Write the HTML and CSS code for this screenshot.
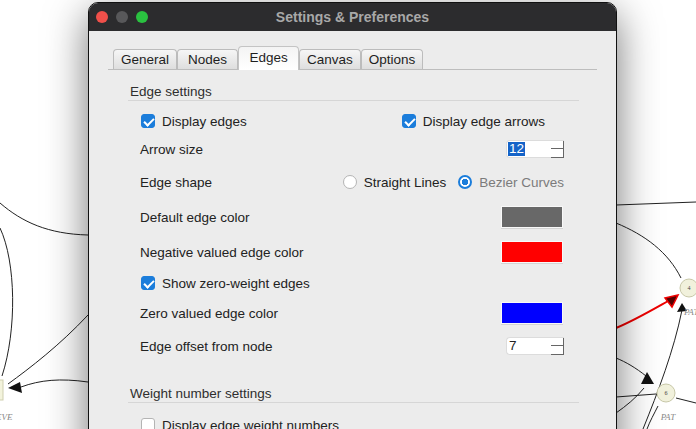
FILE: index.html
```html
<!DOCTYPE html>
<html lang="en">
<head>
    <meta charset="UTF-8">
    <title>Settings &amp; Preferences</title>
    <link rel="stylesheet" href="styles.css">
</head>
<body>
    <!-- graph canvas behind the dialog -->
    <svg class="graph" width="696" height="429" viewBox="0 0 696 429">
        <g fill="none" stroke="#222" stroke-width="1">
            <path d="M0 203 C22 222 48 234 88 235"/>
            <path d="M0 228 C16 262 17 330 2 376"/>
            <path d="M88 315 C60 345 30 368 8 384"/>
            <path d="M88 382 C60 378 40 380 21 387"/>
            <path d="M616 205 L696 202"/>
            <path d="M616 223 C645 235 668 252 681 278"/>
            <path d="M616 358 C626 362 636 368 646 376"/>
            <path d="M616 397 L656 394"/>
            <path d="M616 413 C626 406 636 398 644 388"/>
            <path d="M643 429 C658 392 674 350 682 310"/>
            <path d="M676 398 L696 403"/>
            <path d="M658 406 C654 414 650 421 647 429"/>
        </g>
        <path d="M616 328 C635 320 652 310 668 301" fill="none" stroke="#e00" stroke-width="2"/>
        <polygon points="678,295 665,298 672,307" fill="#500" stroke="#e00" stroke-width="1.5"/>
        <polygon points="8,388 20,382 22,393" fill="#111"/>
        <polygon points="682,303 677,312 687,311" fill="#111"/>
        <polygon points="647,372 641,384 654,384" fill="#111"/>
        <rect x="-14" y="380" width="17" height="20" fill="#f3f3dc" stroke="#cfcfb0"/>
        <circle cx="689" cy="288" r="9" fill="#f1f1dc" stroke="#c8c8a8"/>
        <circle cx="666" cy="393" r="9" fill="#f1f1dc" stroke="#c8c8a8"/>
        <g class="node-num">
            <text x="689" y="290" text-anchor="middle">4</text>
            <text x="666" y="395" text-anchor="middle">6</text>
        </g>
        <g class="node-label">
            <text x="684" y="315">PAT</text>
            <text x="668" y="420" text-anchor="middle">PAT</text>
            <text x="-4" y="420">EVE</text>
        </g>
    </svg>

    <div class="window">
        <div class="titlebar">
            <div class="lights">
                <span class="light red"></span>
                <span class="light grey"></span>
                <span class="light green"></span>
            </div>
            <div class="title">Settings &amp; Preferences</div>
            <div></div>
        </div>

        <div class="content">
            <div class="tabs">
                <div class="tab">General</div>
                <div class="tab">Nodes</div>
                <div class="tab active">Edges</div>
                <div class="tab">Canvas</div>
                <div class="tab">Options</div>
            </div>

            <div class="pane">
                <div class="group-title">Edge settings</div>
                <div class="rows">
                    <div class="row">
                        <label class="check"><span class="box on"></span>Display edges</label>
                        <label class="check arrows"><span class="box on"></span>Display edge arrows</label>
                    </div>
                    <div class="row">
                        <span>Arrow size</span>
                        <div class="spinner"><span class="value selected">12</span><span class="stepper"></span></div>
                    </div>
                    <div class="row gap-m">
                        <span>Edge shape</span>
                        <div class="radios">
                            <label class="radio"><span class="dot"></span>Straight Lines</label>
                            <label class="radio dim"><span class="dot on"></span>Bezier Curves</label>
                        </div>
                    </div>
                    <div class="row gap-l">
                        <span>Default edge color</span>
                        <span class="swatch grey"></span>
                    </div>
                    <div class="row gap-l">
                        <span>Negative valued edge color</span>
                        <span class="swatch red"></span>
                    </div>
                    <div class="row gap-s">
                        <label class="check"><span class="box on"></span>Show zero-weight edges</label>
                    </div>
                    <div class="row gap-xs">
                        <span>Zero valued edge color</span>
                        <span class="swatch blue"></span>
                    </div>
                    <div class="row gap-m">
                        <span>Edge offset from node</span>
                        <div class="spinner"><span class="value">7</span><span class="stepper"></span></div>
                    </div>
                </div>

                <div class="group-title second">Weight number settings</div>
                <div class="rows">
                    <div class="row gap-xs">
                        <label class="check"><span class="box"></span>Display edge weight numbers</label>
                    </div>
                </div>
            </div>
        </div>
    </div>
</body>
</html>
```

FILE: styles.css
```css
* {
    margin: 0;
    padding: 0;
    box-sizing: border-box;
}

body {
    width: 696px;
    height: 429px;
    overflow: hidden;
    position: relative;
    background: #fff;
    font-family: 'Liberation Sans', Arial, sans-serif;
    font-size: 13.5px;
    color: #222;
}

.graph {
    position: absolute;
    left: 0;
    top: 0;
}

.node-num text {
    font-family: 'Liberation Serif', serif;
    font-size: 6px;
    fill: #444;
}

.node-label text {
    font-family: 'Liberation Serif', serif;
    font-style: italic;
    font-size: 9px;
    fill: #888;
}

/* dialog window */
.window {
    position: absolute;
    left: 88px;
    top: 2px;
    width: 529px;
    height: 460px;
    border: 1px solid #111;
    border-radius: 10px 10px 0 0;
    background: #ececec;
    box-shadow: 0 12px 42px rgba(0,0,0,0.55);
    overflow: hidden;
}

.titlebar {
    height: 28px;
    background: #2c2c2e;
    display: grid;
    grid-template-columns: 1fr auto 1fr;
    align-items: center;
}

.lights {
    display: flex;
    gap: 8px;
    padding-left: 7px;
}

.light {
    width: 12px;
    height: 12px;
    border-radius: 50%;
}

.light.red { background: #f0504a; }
.light.grey { background: #58585a; }
.light.green { background: #2ac140; }

.title {
    color: #a8a8a8;
    font-weight: bold;
    font-size: 14px;
}

/* tabs */
.tabs {
    display: flex;
    align-items: flex-end;
    margin: 15px 19px 0 19px;
    padding-left: 5px;
    border-bottom: 1px solid #bdbdbd;
}

.tab {
    min-width: 61px;
    height: 20px;
    line-height: 19px;
    padding: 0 7px;
    text-align: center;
    border: 1px solid #bcbcbc;
    border-bottom: none;
    border-radius: 4px 4px 0 0;
    background: linear-gradient(#f6f6f6, #dedede);
    color: #1e1e1e;
}

.tab.active {
    height: 24px;
    line-height: 21px;
    margin-bottom: -1px;
    background: linear-gradient(#f4f4f4, #ffffff);
    border-color: #c4c4c4;
}

/* settings pane */
.pane {
    padding: 0 37px 0 39px;
}

.group-title {
    padding: 14px 0 0 2px;
    line-height: 16px;
    border-bottom: 1px solid #d6d6d6;
    color: #2e2e2e;
}

.group-title.second {
    margin-top: 12px;
}

.rows {
    padding: 6px 15px 0 12px;
}

.row {
    height: 28px;
    display: flex;
    align-items: center;
    justify-content: space-between;
}

.gap-xs { margin-top: 2px; }
.gap-s { margin-top: 3px; }
.gap-m { margin-top: 5px; }
.gap-l { margin-top: 7px; }

.check {
    display: flex;
    align-items: center;
}

.check.arrows {
    margin-right: 19px;
}

.box {
    width: 14px;
    height: 14px;
    margin: 0 7px 0 1px;
    border-radius: 3px;
    border: 1px solid #b4b4b4;
    background: #fff;
    position: relative;
}

.box.on {
    background: #1b7ddb;
    border-color: #1b7ddb;
}

.box.on::after {
    content: "";
    position: absolute;
    left: 4px;
    top: 1px;
    width: 4px;
    height: 8px;
    border: solid #fff;
    border-width: 0 2px 2px 0;
    transform: rotate(45deg);
}

.radios {
    display: flex;
    gap: 12px;
}

.radio {
    display: flex;
    align-items: center;
}

.radio.dim {
    color: #7b7b7b;
}

.dot {
    width: 14px;
    height: 14px;
    margin-right: 7px;
    border-radius: 50%;
    border: 1px solid #b4b4b4;
    background: #fff;
}

.dot.on {
    border: 2px solid #1b7ddb;
    background: radial-gradient(circle, #1b7ddb 0 3px, #fff 3.5px);
}

.spinner {
    width: 58px;
    height: 18px;
    display: flex;
    align-items: center;
    padding-left: 1px;
    background: #fff;
    border: 1px solid #dcdcdc;
    border-right: none;
    border-radius: 4px 0 0 4px;
}

.value {
    padding: 0 1px;
    line-height: 14px;
}

.value.selected {
    background: #1463c8;
    color: #fff;
}

.stepper {
    margin-left: auto;
    width: 13px;
    height: 17px;
    border-right: 1px solid #666;
    border-bottom: 1px solid #666;
    background: linear-gradient(transparent 7px, #666 7px, #666 8px, transparent 8px);
}

.swatch {
    width: 62px;
    height: 22px;
    margin-right: 1px;
    border: 1px solid #f8f8f8;
    box-shadow: 0 1px 0 #d4d4d4;
}

.swatch.grey { background: #686868; }
.swatch.red { background: #ff0000; }
.swatch.blue { background: #0000ff; }
```
